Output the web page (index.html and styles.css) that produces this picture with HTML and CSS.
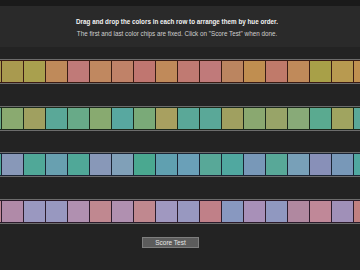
FILE: index.html
```html
<!DOCTYPE html>
<html lang="en">
<head>
  <meta charset="UTF-8" />
  <meta name="viewport" content="width=device-width, initial-scale=1.0"/>
  <title>Hue Test</title>
  <link rel="stylesheet" href="styles.css">
</head>
<body>

  <div class="topbar"></div>

  <header class="intro">
    <p class="lead">Drag and drop the colors in each row to arrange them by hue order.</p>
    <p class="note">The first and last color chips are fixed. Click on "Score Test" when done.</p>
  </header>

  <main class="board">
    <div class="row row-warm" data-colors="#aa9c50,#a99a4f,#a9a04e,#bf8a5a,#c07a78,#c08860,#c08268,#c07670,#c08a5a,#c07a72,#c07a7a,#bb8560,#c08e50,#c07a6a,#c08a5a,#a8a048,#b89a50,#c09050"></div>
    <div class="row row-green" data-colors="#6aa888,#8aaa70,#a0a060,#5aa898,#68aa88,#88aa70,#58a8a0,#7aaa78,#a8a060,#5aa898,#5aa898,#a0a060,#8aa870,#98a468,#88aa78,#5aaa90,#a0a460,#5aa898"></div>
    <div class="row row-blue" data-colors="#50a898,#8898b8,#50a898,#68a0b0,#50a898,#8898b8,#80a0b8,#4aa890,#60a0b0,#6aa0b8,#58a898,#50a8a0,#7898b8,#58a898,#78a0b8,#8890b8,#7898b8,#50a8a0"></div>
    <div class="row row-pink" data-colors="#c08898,#b08aa8,#9a98c0,#9898c0,#b090b0,#c08890,#b090b0,#c0888f,#a098c0,#9898c0,#c08088,#8898c0,#a890b8,#9098c0,#b088a0,#c08898,#a090b8,#c08080"></div>
  </main>

  <div class="actions">
    <button class="score-btn">Score Test</button>
  </div>

  <script>
    document.querySelectorAll('.row').forEach(row => {
      row.getAttribute('data-colors').split(',').forEach(color => {
        const chip = document.createElement('div');
        chip.className = 'chip';
        chip.style.background = color;
        row.appendChild(chip);
      });
    });
  </script>
</body>
</html>
```

FILE: styles.css
```css
body {
  font-family: "Liberation Sans", Arial, sans-serif;
  background-color: #232323;
  margin: 0;
  padding: 0;
  overflow: hidden;
}

.topbar {
  height: 6px;
  background: #1a1a1a;
}

.intro {
  background: #2a2a2a;
  height: 41px;
  padding-right: 6px;
  text-align: center;
  box-sizing: border-box;
  padding-top: 10px;
}

.intro p {
  margin: 0;
  line-height: 12px;
}

.lead {
  font-weight: bold;
  font-size: 6.3px;
  color: #f2f2f2;
}

.note {
  font-size: 6.3px;
  color: #cfcfcf;
}

.board {
  margin-top: 12px;
  display: flex;
  flex-direction: column;
  gap: 21.5px;
}

.row {
  display: flex;
  overflow: hidden;
  border-top: 1px solid #6c6c6c;
  border-bottom: 1px solid #6c6c6c;
}

.chip {
  flex-shrink: 0;
  width: 21px;
  height: 21px;
  border-top: 1px solid;
  border-bottom: 1px solid;
  border-right: 1px solid;
  border-color: inherit;
}

.chip:first-child {
  margin-left: -20px;
}

.row-warm .chip { border-color: #3b1c14; }
.row-green .chip { border-color: #1c2a1c; }
.row-blue .chip { border-color: #1a2434; }
.row-pink .chip { border-color: #2c1c2c; }

.actions {
  display: flex;
  padding-top: 13px;
  padding-left: 142px;
}

.score-btn {
  font-family: "Liberation Sans", Arial, sans-serif;
  font-size: 6.5px;
  color: #e6e6e6;
  background: #5c5c5c;
  border: 1px solid #7e7e7e;
  width: 57px;
  height: 11px;
  padding: 0;
  line-height: 9px;
  cursor: pointer;
}
```
